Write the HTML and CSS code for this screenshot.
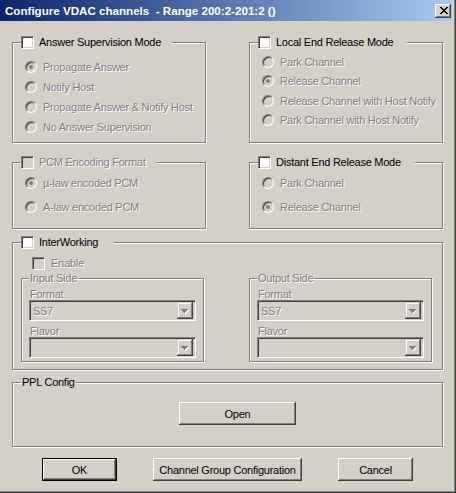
FILE: index.html
```html
<!DOCTYPE html>
<html>
<head>
<meta charset="utf-8">
<title>Configure VDAC channels</title>
<link rel="stylesheet" href="styles.css">
</head>
<body>
<div class="window">
  <div class="titlebar">
    <span class="title">Configure VDAC channels&nbsp; - Range 200:2-201:2 ()</span>
    <span class="close"><svg width="8" height="7" viewBox="0 0 8 7"><path d="M0 0h2v1h1v1h2v-1h1v-1h2v1h-1v1h-1v1h-1v1h1v1h1v1h1v1h-2v-1h-1v-1h-2v1h-1v1h-2v-1h1v-1h1v-1h1v-1h-1v-1h-1v-1h-1z" fill="#000"/></svg></span>
  </div>
  <div class="client">
    <div class="row row-top">
      <div class="group half">
        <div class="legend"><span class="check"></span><span>Answer Supervision Mode</span></div>
        <div class="opts opts-answer">
          <div class="opt"><span class="radio on"></span><span class="dis">Propagate Answer</span></div>
          <div class="opt"><span class="radio"></span><span class="dis">Notify Host</span></div>
          <div class="opt"><span class="radio"></span><span class="dis">Propagate Answer &amp; Notify Host</span></div>
          <div class="opt"><span class="radio"></span><span class="dis">No Answer Supervision</span></div>
        </div>
      </div>
      <div class="group half">
        <div class="legend legend-local"><span class="check"></span><span>Local End Release Mode</span></div>
        <div class="opts opts-local">
          <div class="opt"><span class="radio"></span><span class="dis">Park Channel</span></div>
          <div class="opt"><span class="radio on"></span><span class="dis">Release Channel</span></div>
          <div class="opt"><span class="radio"></span><span class="dis">Release Channel with Host Notify</span></div>
          <div class="opt"><span class="radio"></span><span class="dis">Park Channel with Host Notify</span></div>
        </div>
      </div>
    </div>

    <div class="row row-mid">
      <div class="group half">
        <div class="legend"><span class="check off"></span><span class="dis">PCM Encoding Format</span></div>
        <div class="opts opts-pcm">
          <div class="opt"><span class="radio on"></span><span class="dis">µ-law encoded PCM</span></div>
          <div class="opt"><span class="radio"></span><span class="dis">A-law encoded PCM</span></div>
        </div>
      </div>
      <div class="group half">
        <div class="legend legend-local"><span class="check"></span><span>Distant End Release Mode</span></div>
        <div class="opts opts-pcm">
          <div class="opt"><span class="radio"></span><span class="dis">Park Channel</span></div>
          <div class="opt"><span class="radio on"></span><span class="dis">Release Channel</span></div>
        </div>
      </div>
    </div>

    <div class="group wide inter">
      <div class="legend legend-inter"><span class="check"></span><span>InterWorking</span></div>
      <div class="enable"><span class="check off"></span><span class="dis">Enable</span></div>
      <div class="sides">
        <div class="group side">
          <div class="label-legend"><span class="dis">Input Side</span></div>
          <div class="field-label dis">Format</div>
          <div class="combo"><span class="combo-text dis">SS7</span><span class="drop"><svg width="8" height="5" viewBox="0 0 8 5"><path d="M1 1h7v1h-1v1h-1v1h-1v1h-1v-1h-1v-1h-1v-1h-1z" fill="#fff"/><path d="M0 0h7v1h-1v1h-1v1h-1v1h-1v-1h-1v-1h-1v-1h-1z" fill="#808080"/></svg></span></div>
          <div class="field-label dis">Flavor</div>
          <div class="combo"><span class="combo-text dis"></span><span class="drop"><svg width="8" height="5" viewBox="0 0 8 5"><path d="M1 1h7v1h-1v1h-1v1h-1v1h-1v-1h-1v-1h-1v-1h-1z" fill="#fff"/><path d="M0 0h7v1h-1v1h-1v1h-1v1h-1v-1h-1v-1h-1v-1h-1z" fill="#808080"/></svg></span></div>
        </div>
        <div class="group side">
          <div class="label-legend"><span class="dis">Output Side</span></div>
          <div class="field-label dis">Format</div>
          <div class="combo"><span class="combo-text dis">SS7</span><span class="drop"><svg width="8" height="5" viewBox="0 0 8 5"><path d="M1 1h7v1h-1v1h-1v1h-1v1h-1v-1h-1v-1h-1v-1h-1z" fill="#fff"/><path d="M0 0h7v1h-1v1h-1v1h-1v1h-1v-1h-1v-1h-1v-1h-1z" fill="#808080"/></svg></span></div>
          <div class="field-label dis">Flavor</div>
          <div class="combo"><span class="combo-text dis"></span><span class="drop"><svg width="8" height="5" viewBox="0 0 8 5"><path d="M1 1h7v1h-1v1h-1v1h-1v1h-1v-1h-1v-1h-1v-1h-1z" fill="#fff"/><path d="M0 0h7v1h-1v1h-1v1h-1v1h-1v-1h-1v-1h-1v-1h-1z" fill="#808080"/></svg></span></div>
        </div>
      </div>
    </div>

    <div class="group wide ppl">
      <div class="label-legend"><span>PPL Config</span></div>
      <button class="btn btn-open">Open</button>
    </div>

    <div class="buttons">
      <button class="btn btn-default">OK</button>
      <button class="btn btn-wide">Channel Group Configuration</button>
      <button class="btn">Cancel</button>
    </div>
  </div>
</div>
</body>
</html>
```

FILE: styles.css
```css
* { box-sizing: border-box; }

body {
  margin: 0;
  background: #d4d0c8;
  font-family: "Liberation Sans", Arial, sans-serif;
  font-size: 11px;
  letter-spacing: -0.25px;
  color: #000;
}

.window {
  width: 456px;
  height: 493px;
  padding: 0 4px 4px 0;
  background: #d4d0c8;
  box-shadow: inset -1px -1px #404040, inset -2px -2px #808080;
  overflow: hidden;
}

.titlebar {
  height: 21px;
  display: flex;
  align-items: center;
  justify-content: space-between;
  padding: 0 1px 0 5px;
  background: linear-gradient(to right, #0a246a, #a6caf0);
}

.title {
  color: #fff;
  font-weight: bold;
  font-size: 11.6px;
  letter-spacing: 0;
  white-space: pre;
}

.close {
  width: 16px;
  height: 14px;
  display: flex;
  align-items: center;
  justify-content: center;
  padding-left: 1px;
  background: #d4d0c8;
  box-shadow: inset -1px -1px #404040, inset 1px 1px #fff, inset -2px -2px #808080;
}

.close svg { display: block; }

.client {
  padding: 21px 0 0 12px;
}

.row {
  display: flex;
  gap: 43px;
}

.row-top { margin-bottom: 19px; }
.row-mid { margin-bottom: 13px; }

.group {
  border: 1px solid #808080;
  box-shadow: inset 1px 1px #fff, 1px 1px #fff;
}

.half { width: 194px; }
.row-top .half { height: 101px; }
.row-mid .half { height: 67px; }

.wide { width: 431px; }
.inter { height: 128px; margin-bottom: 12px; }
.ppl { height: 65px; }

.legend {
  display: flex;
  align-items: center;
  width: fit-content;
  height: 14px;
  margin: -8px 0 0 8px;
  padding-right: 11px;
  background: #d4d0c8;
}

.legend-local { padding-right: 14px; }
.legend-inter { padding-right: 16px; }

.check {
  width: 13px;
  height: 13px;
  margin-right: 5px;
  background: #fff;
  border: 1px solid;
  border-color: #808080 #fff #fff #808080;
  box-shadow: inset 1px 1px #404040, inset -1px -1px #d4d0c8;
  flex: none;
}

.check.off { background: #d4d0c8; }

.dis {
  color: #808080;
  text-shadow: 1px 1px 0 #fff;
}

.opts { margin-left: 12px; }
.opts-answer { margin-top: 8px; }
.opts-local { margin-top: 3px; }
.opts-pcm { margin-top: 2px; }

.opt {
  display: flex;
  align-items: center;
  height: 20px;
  white-space: nowrap;
}

.opts-local .opt { height: 19.5px; }
.opts-pcm .opt { height: 24px; }

.radio {
  width: 12px;
  height: 12px;
  margin-right: 6px;
  border-radius: 50%;
  background: #d4d0c8;
  border: 1px solid;
  border-color: #808080 #fff #fff #808080;
  box-shadow: inset 1px 1px #404040, inset -1px -1px #d4d0c8;
  display: flex;
  align-items: center;
  justify-content: center;
  flex: none;
}

.radio.on::after {
  content: "";
  width: 4px;
  height: 4px;
  border-radius: 50%;
  background: #808080;
}

.enable {
  display: flex;
  align-items: center;
  height: 14px;
  margin: 7px 0 0 19px;
}

.enable .check { margin-right: 6px; }

.sides {
  display: flex;
  gap: 45px;
  margin: 8px 0 0 8px;
}

.side {
  width: 183px;
  height: 84px;
}

.label-legend {
  width: fit-content;
  height: 12px;
  line-height: 12px;
  margin: -7px 0 0 7px;
  padding: 0 1px;
  background: #d4d0c8;
}

.ppl .label-legend { margin-left: 8px; }

.field-label {
  height: 12px;
  line-height: 12px;
  margin: 4px 0 0 8px;
}

.combo {
  display: flex;
  align-items: center;
  justify-content: space-between;
  width: 167px;
  height: 21px;
  margin-left: 7px;
  padding: 2px;
  background: #d4d0c8;
  border: 1px solid;
  border-color: #808080 #fff #fff #808080;
  box-shadow: inset 1px 1px #404040, inset -1px -1px #d4d0c8;
}

.combo-text { padding-left: 1px; }

.drop {
  width: 16px;
  height: 17px;
  display: flex;
  align-items: center;
  justify-content: center;
  padding-top: 1px;
  background: #d4d0c8;
  box-shadow: inset -1px -1px #404040, inset 1px 1px #d4d0c8, inset -2px -2px #808080, inset 2px 2px #fff;
}

.drop svg { display: block; }

.btn {
  display: block;
  width: 75px;
  height: 23px;
  padding: 0;
  border: none;
  background: #d4d0c8;
  font-family: "Liberation Sans", Arial, sans-serif;
  font-size: 11px;
  letter-spacing: -0.25px;
  color: #000;
  box-shadow: inset -1px -1px #404040, inset 1px 1px #fff, inset -2px -2px #808080, inset 2px 2px #d4d0c8;
}

.btn-open {
  width: 117px;
  margin: 14px 0 0 166px;
}

.btn-default { border: 1px solid #000; }

.btn-wide { width: 149px; }

.buttons {
  display: flex;
  gap: 36px;
  margin: 11px 0 0 30px;
}
```
